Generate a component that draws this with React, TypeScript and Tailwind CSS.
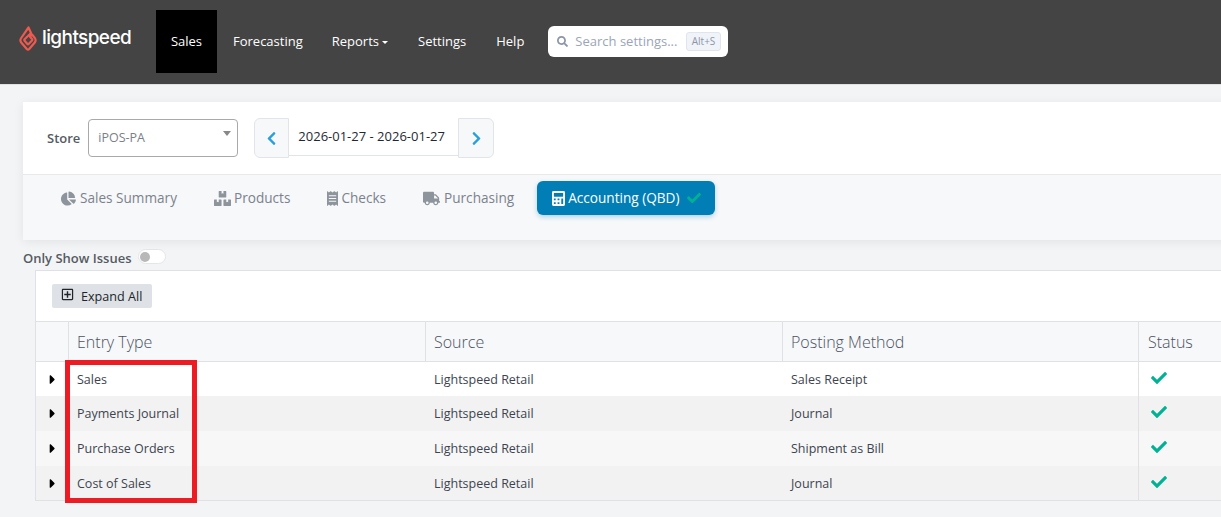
import React from 'react';
import { FaCalculator, FaCaretRight, FaChartPie, FaCheck, FaChevronLeft, FaChevronRight, FaReceipt, FaSearch, FaTruck, FaBoxes, FaRegPlusSquare } from 'react-icons/fa';

const rows = [
    { type: 'Sales', method: 'Sales Receipt', cls: 'bg-white h-[34px]' },
    { type: 'Payments Journal', method: 'Journal', cls: 'bg-[#f2f2f2] h-[35px]' },
    { type: 'Purchase Orders', method: 'Shipment as Bill', cls: 'bg-[#f7f7f7] h-[35px]' },
    { type: 'Cost of Sales', method: 'Journal', cls: 'bg-[#f2f2f2] h-[34px]' },
];

const tabs = [
    { label: 'Sales Summary', gap: 'gap-[4px]', icon: <FaChartPie className="size-[15px]" /> },
    { label: 'Products', gap: 'gap-[3px]', icon: <FaBoxes className="size-[17px]" /> },
    { label: 'Checks', gap: 'gap-[3px]', icon: <FaReceipt className="w-[11px] h-[15px]" /> },
    { label: 'Purchasing', gap: 'gap-[4px]', icon: <FaTruck className="size-[17px]" /> },
];

const Logo = () => (
    <div className="flex items-center gap-[5px] text-white">
        <svg width="18" height="25" viewBox="0 0 18 25" fill="none" className="text-[#ee5a50]">
            <path d="M9.5 1.5 L12 7 L5.6 13.2 Q5 14 5.6 14.8 L8.4 18 Q9 18.6 9.6 18 L13 14.5 Q13.6 13.8 13 13 L11 10.8 L13 8.4 L15.8 12 Q17.4 14.4 15.8 16.5 L10.2 23 Q9 24.2 7.8 23 L2.2 16.5 Q0.6 14.4 2.2 12 Z" stroke="currentColor" strokeWidth="2.2" strokeLinejoin="round" fill="none" />
        </svg>
        <span className="text-[19px] font-medium leading-none tracking-[-0.6px] font-['Inter',sans-serif] pb-[1px]">lightspeed</span>
    </div>
);

export default function App() {
    return (
        <div className="relative w-[1221px] h-[517px] overflow-hidden bg-[#f3f4f6] font-['Open_Sans',sans-serif]">
            <header className="h-[85px] bg-[#444444] border-b border-[#dfe1e5] flex items-start text-white text-[13px]">
                <div className="pl-[19px] w-[156px] h-[76px] flex items-center">
                    <Logo />
                </div>
                <nav className="flex items-start h-full">
                    <a className="mt-[10px] w-[61px] h-[63px] bg-black flex items-center justify-center">Sales</a>
                    <a className="ml-[16px] h-[84px] flex items-center">Forecasting</a>
                    <a className="ml-[29px] h-[84px] flex items-center gap-[3px]">
                        Reports
                        <span className="border-x-[3px] border-t-[3px] border-x-transparent border-t-white" />
                    </a>
                    <a className="ml-[30px] h-[84px] flex items-center">Settings</a>
                    <a className="ml-[30px] h-[84px] flex items-center">Help</a>
                </nav>
                <div className="ml-[24px] mt-[26px] w-[180px] h-[31px] bg-white rounded-[6px] flex items-center pl-[9px] pr-[7px]">
                    <FaSearch className="size-[11px] text-[#8c96a8]" />
                    <span className="ml-[7px] text-[13px] text-[#9aa5b8]">Search settings...</span>
                    <span className="ml-auto h-[19px] px-[5px] flex items-center rounded-[3px] bg-[#f0f3f8] border border-[#dfe5ee] text-[10px] text-[#8c96a8]">Alt+S</span>
                </div>
            </header>

            <section className="ml-[23px] mt-[17px] w-[1300px] bg-white shadow-[0_2px_10px_rgba(0,0,0,0.07)]">
                <div className="h-[73px] pl-[24px] flex items-start border-b border-[#e8e9ec]">
                    <span className="mt-[27px] text-[13px] font-semibold text-[#555b62]">Store</span>
                    <div className="relative ml-[8px] mt-[17px] w-[150px] h-[38px] rounded-[4px] border border-[#a9a9a9] pl-[9px] pt-[1px] flex items-center text-[12.5px] text-[#7a8088]">
                        iPOS-PA
                        <span className="absolute right-[6px] top-[11px] border-x-[4px] border-t-[5px] border-x-transparent border-t-[#888888]" />
                    </div>
                    <div className="ml-[16px] mt-[16px] flex items-start">
                        <div className="w-[35px] h-[40px] bg-[#f7f8fa] border border-[#e1e5ea] rounded-l-[6px] flex items-center justify-center text-[#2a9fe0]">
                            <FaChevronLeft className="size-[15px]" />
                        </div>
                        <div className="w-[169px] h-[38px] border-b border-[#e1e5ea] pl-[9px] pt-[1px] flex items-center text-[13px] text-[#1f2933]">2026-01-27 - 2026-01-27</div>
                        <div className="w-[36px] h-[40px] bg-[#f7f8fa] border border-[#e1e5ea] rounded-r-[6px] flex items-center justify-center text-[#2a9fe0]">
                            <FaChevronRight className="size-[15px]" />
                        </div>
                    </div>
                </div>
                <div className="h-[65px] bg-[#f7f8fa] pl-[38px] pt-[6px] flex items-start text-[13.6px] text-[#7b828c]">
                    <div className="flex items-center gap-[37px] mr-[23px]">
                        {tabs.map(t => (
                            <div key={t.label} className={`h-[34px] flex items-center ${t.gap}`}>
                                <span className="text-[#8e949c]">{t.icon}</span>
                                {t.label}
                            </div>
                        ))}
                    </div>
                    <div className="h-[34px] w-[178px] rounded-[6px] bg-[#017eb5] text-white flex items-center pl-[15px] gap-[3px] shadow-[0_2px_5px_rgba(1,126,181,0.3)]">
                        <FaCalculator className="w-[13px] h-[15px]" />
                        Accounting (QBD)
                        <FaCheck className="ml-[5px] size-[14px] text-[#00b294]" />
                    </div>
                </div>
            </section>

            <div className="ml-[23px] mt-[8px] mb-[1px] h-[21px] flex items-center text-[13px] font-semibold text-[#555b62]">
                Only Show Issues
                <span className="ml-[7px] mb-[4px] w-[28px] h-[15px] rounded-full bg-white border border-[#e3e5e8] flex items-center pl-[1px]">
                    <span className="size-[10px] rounded-full bg-[#b8b8b8]" />
                </span>
            </div>

            <section className="ml-[35px] w-[1300px] bg-white border border-[#dfe1e5] text-[12.5px] text-[#3d4450]">
                <div className="h-[51px] flex items-center pl-[16px] border-b border-[#dfe1e5]">
                    <div className="h-[24px] w-[100px] mt-[-1px] rounded-[2px] bg-[#dee2e6] flex items-center pl-[9px] gap-[7px] text-[12.6px] text-[#212529]">
                        <FaRegPlusSquare className="size-[13px] mb-[2px]" />
                        <span className="mt-[3px]">Expand All</span>
                    </div>
                </div>
                <div className="grid grid-cols-[32px_357px_357px_356px_1fr] h-[40px] bg-[#f7f8fa] border-b border-[#dfe1e5] text-[16px] font-light text-[#4a5260]">
                    <div />
                    <div className="border-l border-[#dfe1e5] pl-[8px] flex items-center">Entry Type</div>
                    <div className="border-l border-[#dfe1e5] pl-[8px] flex items-center">Source</div>
                    <div className="border-l border-[#dfe1e5] pl-[8px] flex items-center">Posting Method</div>
                    <div className="border-l border-[#dfe1e5] pl-[9px] flex items-center">Status</div>
                </div>
                {rows.map(r => (
                    <div key={r.type} className={`grid grid-cols-[32px_357px_357px_356px_1fr] ${r.cls}`}>
                        <div className="flex items-center justify-center text-black"><FaCaretRight className="size-[15px]" /></div>
                        <div className="pl-[9px] pt-[2px] flex items-center">{r.type}</div>
                        <div className="pl-[9px] pt-[2px] flex items-center">Lightspeed Retail</div>
                        <div className="pl-[9px] pt-[2px] flex items-center">{r.method}</div>
                        <div className="border-l border-[#dfe1e5] pl-[12px] flex items-center pb-[3px]">
                            <FaCheck className="size-[16px] text-[#00b294]" />
                        </div>
                    </div>
                ))}
            </section>

            <div className="absolute left-[65px] top-[360px] w-[132px] h-[143px] border-[5px] border-[#ed1c24]" />
        </div>
    );
}
